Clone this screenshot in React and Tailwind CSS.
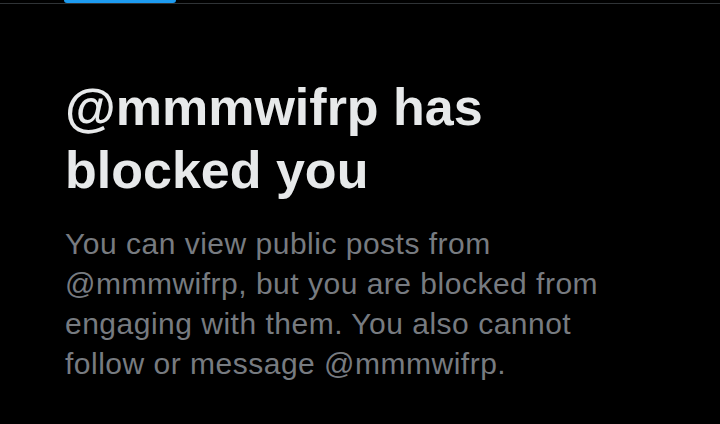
import React from 'react';

export default function App() {
  return (
    <div className="w-[720px] h-[424px] bg-black overflow-hidden relative">
      <div className="h-[3px] pl-[64px]">
        <div className="w-[112px] h-[3px] bg-[#1d9bf0] rounded-b-full"></div>
      </div>
      <div className="h-px bg-[#2f3336]"></div>
      <div className="px-[65px] pt-[72px]">
        <h1
          className="text-[#e7e9ea] font-bold text-[52px] leading-[63px]"
          style={{ fontFamily: '"Liberation Sans", Arial, sans-serif' }}
        >
          @mmmwifrp has
          <br />
          blocked you
        </h1>
        <p
          className="mt-[22px] text-[#777b80] text-[30px] leading-[40px] tracking-[0.5px]"
          style={{ fontFamily: '"Liberation Sans", Arial, sans-serif' }}
        >
          You can view public posts from
          <br />
          @mmmwifrp, but you are blocked from
          <br />
          engaging with them. You also cannot
          <br />
          follow or message @mmmwifrp.
        </p>
      </div>
    </div>
  );
}
